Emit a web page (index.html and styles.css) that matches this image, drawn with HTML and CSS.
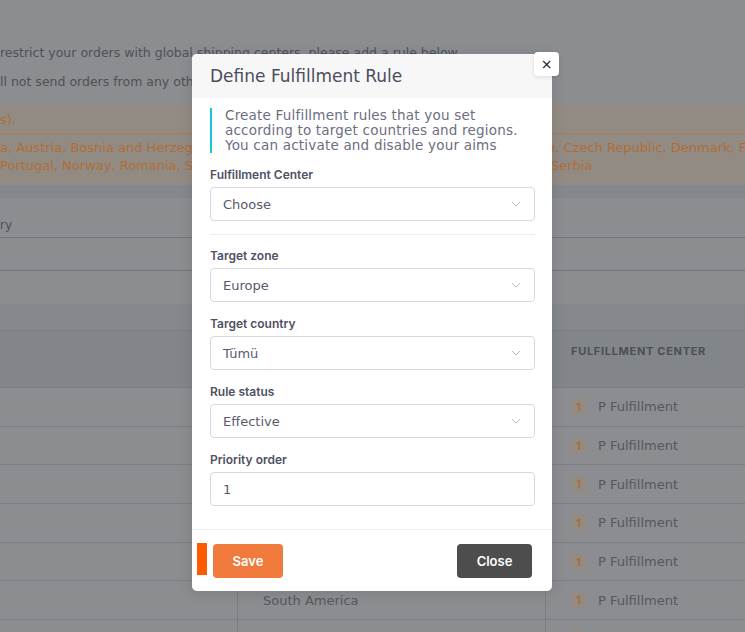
FILE: index.html
```html
<!DOCTYPE html>
<html lang="en">
<head>
<meta charset="utf-8">
<title>Define Fulfillment Rule</title>
<link rel="stylesheet" href="styles.css">
</head>
<body>
<div class="page">
  <section class="intro">
    <p class="intro-line">restrict your orders with global shipping centers, please add a rule below.</p>
    <p class="intro-line second">ll not send orders from any other fulfillment center in that zone.</p>
    <div class="alert">
      <div class="alert-title">s).</div>
      <div class="alert-body">
        <div class="alert-line"><span class="seg">a, Austria, Bosnia and Herzegovina, Belgium, Bulgaria, Croatia</span><span class="seg">n, Czech Republic, Denmark, Finland, France</span></div>
        <div class="alert-line"><span class="seg">Portugal, Norway, Romania, Sweden, Slovakia, Slovenia</span><span class="seg shift">Serbia</span></div>
      </div>
    </div>
  </section>

  <section class="zone-card">
    <div class="zone-head">ry</div>
    <div class="zone-row"></div>
    <div class="zone-row"></div>
  </section>

  <section class="rule-table">
    <div class="th"></div><div class="th"></div><div class="th">FULFILLMENT CENTER</div>
    <div class="td"></div><div class="td">Europe</div><div class="td"><span class="badge">1</span>P Fulfillment</div>
    <div class="td"></div><div class="td">Europe</div><div class="td"><span class="badge">1</span>P Fulfillment</div>
    <div class="td"></div><div class="td">Asia</div><div class="td"><span class="badge">1</span>P Fulfillment</div>
    <div class="td"></div><div class="td">Africa</div><div class="td"><span class="badge">1</span>P Fulfillment</div>
    <div class="td"></div><div class="td">North America</div><div class="td"><span class="badge">1</span>P Fulfillment</div>
    <div class="td"></div><div class="td">South America</div><div class="td"><span class="badge">1</span>P Fulfillment</div>
    <div class="td"></div><div class="td">Oceania</div><div class="td"><span class="badge">1</span>P Fulfillment</div>
  </section>
</div>

<div class="backdrop"></div>

<div class="modal">
  <div class="modal-header">
    <h2 class="modal-title">Define Fulfillment Rule</h2>
    <button class="modal-x" type="button">&#215;</button>
  </div>
  <div class="modal-body">
    <div class="info">Create Fulfillment rules that you set<br>according to target countries and regions.<br>You can activate and disable your aims</div>

    <div class="field first">
      <label class="field-label">Fulfillment Center</label>
      <div class="select"><span>Choose</span><svg class="chev" width="10" height="6" viewBox="0 0 10 6"><polyline points="1,1 5,5 9,1" fill="none" stroke="#b8b8c6" stroke-width="1"/></svg></div>
    </div>
    <div class="divider"></div>
    <div class="field">
      <label class="field-label">Target zone</label>
      <div class="select"><span>Europe</span><svg class="chev" width="10" height="6" viewBox="0 0 10 6"><polyline points="1,1 5,5 9,1" fill="none" stroke="#b8b8c6" stroke-width="1"/></svg></div>
    </div>
    <div class="field">
      <label class="field-label">Target country</label>
      <div class="select"><span>Tümü</span><svg class="chev" width="10" height="6" viewBox="0 0 10 6"><polyline points="1,1 5,5 9,1" fill="none" stroke="#b8b8c6" stroke-width="1"/></svg></div>
    </div>
    <div class="field">
      <label class="field-label">Rule status</label>
      <div class="select"><span>Effective</span><svg class="chev" width="10" height="6" viewBox="0 0 10 6"><polyline points="1,1 5,5 9,1" fill="none" stroke="#b8b8c6" stroke-width="1"/></svg></div>
    </div>
    <div class="field">
      <label class="field-label">Priority order</label>
      <div class="select"><span>1</span></div>
    </div>
  </div>
  <div class="modal-footer">
    <div class="footer-left">
      <span class="marker"></span>
      <button class="btn btn-save" type="button">Save</button>
    </div>
    <button class="btn btn-close" type="button">Close</button>
  </div>
</div>
</body>
</html>
```

FILE: styles.css
```css
* { box-sizing: border-box; }

html, body { margin: 0; }

body {
  width: 745px;
  height: 632px;
  overflow: hidden;
  position: relative;
  background: #bec2c7;
  font-family: "DejaVu Sans", Inter, sans-serif;
}

.page {
  display: flex;
  flex-direction: column;
}

/* intro card */
.intro {
  background: #c7cbcf;
  padding-top: 43px;
  height: 185px;
}

.intro-line {
  margin: 0;
  font-size: 12.5px;
  line-height: 20px;
  color: #6f757e;
  white-space: nowrap;
  overflow: hidden;
}

.intro-line.second { margin-top: 9px; }

.alert {
  margin-top: 11px;
  height: 82px;
  background: #d1c8be;
  color: #fa9d4f;
  font-size: 13px;
}

.alert-title {
  padding: 8px 0 4px;
  line-height: 18px;
  border-bottom: 1px solid #fab372;
}

.alert-body { padding-top: 5px; }

.alert-line {
  display: grid;
  grid-template-columns: 547px 1fr;
  line-height: 18px;
  white-space: nowrap;
}

.seg { overflow: hidden; }
.seg.shift { padding-left: 4px; }

/* zone card */
.zone-card {
  margin-top: 13px;
  background: #c7cbcf;
}

.zone-head {
  height: 40px;
  display: flex;
  align-items: flex-end;
  padding-bottom: 5px;
  font-size: 12px;
  color: #727783;
  border-bottom: 1px solid #a4a9b3;
}

.zone-row {
  height: 33px;
  border-bottom: 1px solid #a4a9b3;
}

.zone-row:last-child { border-bottom: 0; }

/* table */
.rule-table {
  margin-top: 26px;
  display: grid;
  grid-template-columns: 237px 308px 1fr;
  grid-auto-rows: 38.7px;
  grid-template-rows: 58px;
  background: #c7cbcf;
}

.th {
  background: #bbbfc5;
  border-top: 1px solid #b2b6bc;
  border-bottom: 1px solid #b2b6bc;
  padding: 13px 0 0 26px;
  font-family: Inter, sans-serif;
  font-size: 11px;
  line-height: 14px;
  font-weight: 700;
  letter-spacing: 0.7px;
  color: #6c717d;
}

.td {
  display: flex;
  align-items: center;
  padding-left: 25px;
  font-size: 13px;
  color: #797e88;
  border-bottom: 1px solid #b0b4bb;
}

.td:nth-child(3n+2), .td:nth-child(3n) { border-left: 1px solid #b0b4bb; }

.badge {
  display: inline-flex;
  align-items: center;
  justify-content: center;
  width: 15px;
  height: 16px;
  margin-right: 12px;
  border-radius: 3px;
  background: #d3c6b9;
  color: #f09a50;
  font-family: Inter, sans-serif;
  font-size: 11px;
  font-weight: 600;
}

/* backdrop + modal */
.backdrop {
  position: absolute;
  inset: 0;
  background: rgba(0, 0, 0, 0.3);
}

.modal {
  position: absolute;
  left: 192px;
  top: 54px;
  width: 360px;
  background: #ffffff;
  border-radius: 5px;
  box-shadow: 0 2px 14px rgba(0, 0, 0, 0.12);
}

.modal-header {
  height: 44px;
  display: flex;
  align-items: center;
  padding-left: 18px;
  background: #f7f7f8;
  border-radius: 5px 5px 0 0;
}

.modal-title {
  margin: 0;
  font-size: 17px;
  font-weight: 400;
  color: #4b4d5f;
}

.modal-x {
  position: absolute;
  top: -2px;
  right: -7px;
  width: 25px;
  height: 24px;
  padding: 0;
  border: 0;
  border-radius: 4px;
  background: #ffffff;
  box-shadow: 0 1px 4px rgba(0, 0, 0, 0.12);
  font-family: "DejaVu Sans", sans-serif;
  font-size: 14px;
  line-height: 22px;
  color: #111111;
}

.modal-body {
  padding: 10px 17px 23px 18px;
}

.info {
  border-left: 2px solid #16c7de;
  padding-left: 13px;
  font-size: 13.5px;
  line-height: 15px;
  letter-spacing: 0.2px;
  color: #6c6e82;
}

.field { margin-top: 15px; }

.field-label {
  display: block;
  height: 14px;
  margin-bottom: 5px;
  font-family: Inter, sans-serif;
  font-size: 12px;
  line-height: 14px;
  font-weight: 600;
  color: #4f5164;
}

.select {
  height: 34px;
  display: flex;
  align-items: center;
  justify-content: space-between;
  padding: 0 13px 0 12px;
  border: 1px solid #d8d8e2;
  border-radius: 4px;
  font-size: 13px;
  color: #585a6c;
}

.chev { display: block; }

.divider {
  margin-top: 13px;
  height: 1px;
  background: #ebebf1;
}

.divider + .field { margin-top: 14px; }

.modal-footer {
  display: flex;
  align-items: center;
  justify-content: space-between;
  padding: 14px 20px 13px 5px;
  border-top: 1px solid #efeff3;
}

.footer-left {
  display: flex;
  align-items: flex-start;
  gap: 6px;
}

.marker {
  display: block;
  width: 10px;
  height: 32px;
  margin-top: -1px;
  background: #ff5a00;
}

.btn {
  height: 34px;
  border: 0;
  border-radius: 4px;
  color: #ffffff;
  font-family: Inter, sans-serif;
  font-size: 13px;
  font-weight: 600;
  padding: 0;
}

.btn-save { width: 70px; background: #f07a3c; }
.btn-close { width: 75px; background: #4d4d4d; }
```
